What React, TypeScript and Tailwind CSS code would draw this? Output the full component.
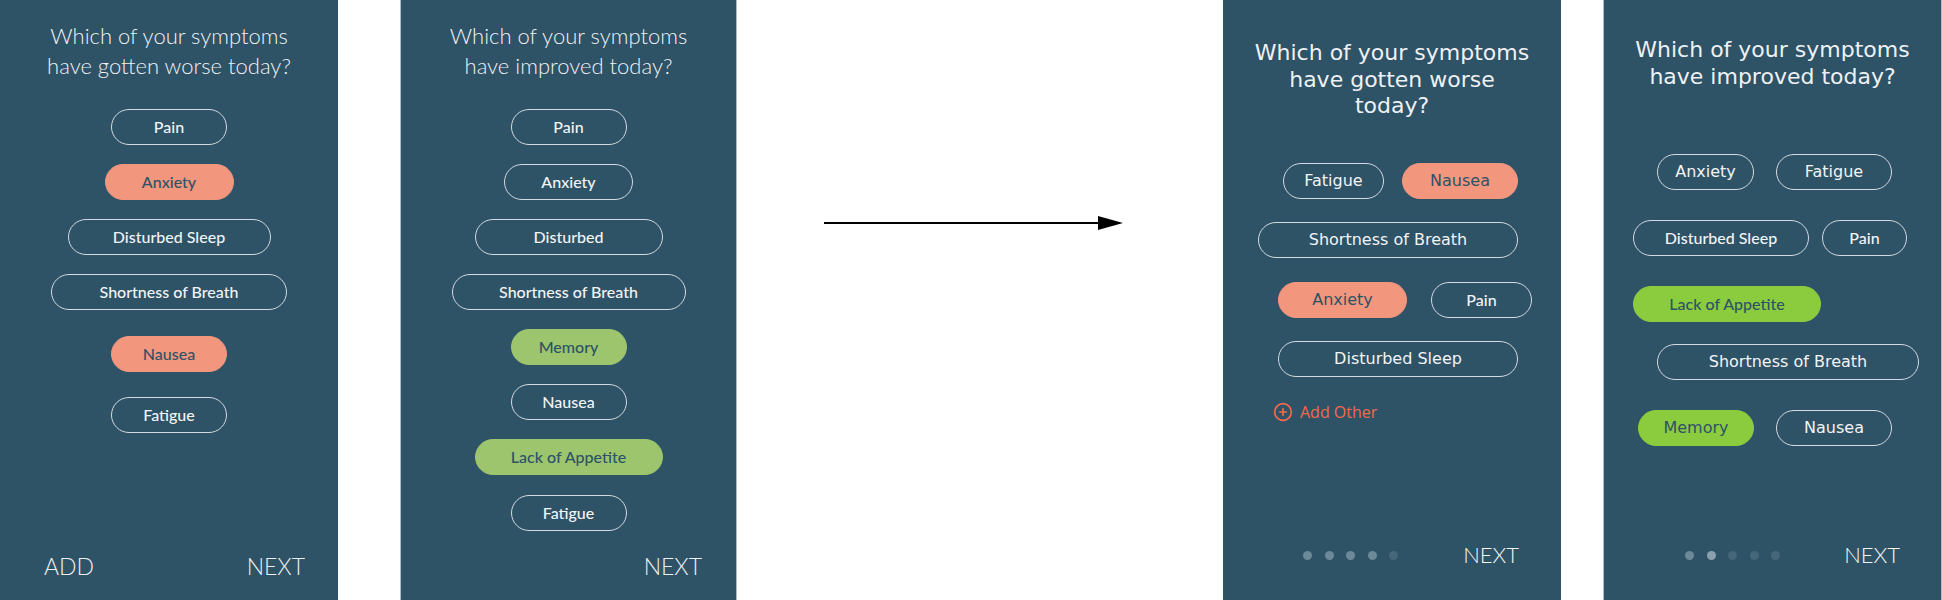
import { CirclePlus } from "lucide-react";

type Pill = { label: string; w: string; tone?: "red" | "green" | "lime"; mt: string };

const avenir = "font-['Lato','Noto_Sans',sans-serif] font-medium";
const mont = "font-['DejaVu_Sans','Noto_Sans',sans-serif] font-normal";

const toneClass = (tone?: Pill["tone"]) => {
  if (tone === "red") return "bg-[#f2967e] border-[#f2967e] text-[#2e5266]";
  if (tone === "green") return "bg-[#9dc56e] border-[#9dc56e] text-[#2e5266]";
  if (tone === "lime") return "bg-[#8acc3e] border-[#8acc3e] text-[#2e5266]";
  return "border-[#d3dbe0] text-[#f2f4f5]";
};

const PillBtn = ({ label, w, tone, mt, font }: Pill & { font: string }) => (
  <div
    className={`${w} ${mt} ${font} ${toneClass(tone)} h-9 shrink-0 rounded-full border-[1.5px] flex items-center justify-center text-[16px]`}
  >
    {label}
  </div>
);

const worseList: Pill[] = [
  { label: "Pain", w: "w-[116px]", mt: "mt-[28px]" },
  { label: "Anxiety", w: "w-[129px]", tone: "red", mt: "mt-[19px]" },
  { label: "Disturbed Sleep", w: "w-[203px]", mt: "mt-[19px]" },
  { label: "Shortness of Breath", w: "w-[236px]", mt: "mt-[19px]" },
  { label: "Nausea", w: "w-[116px]", tone: "red", mt: "mt-[26px]" },
  { label: "Fatigue", w: "w-[116px]", mt: "mt-[25px]" },
];

const improvedList: Pill[] = [
  { label: "Pain", w: "w-[116px]", mt: "mt-[28px]" },
  { label: "Anxiety", w: "w-[129px]", mt: "mt-[19px]" },
  { label: "Disturbed", w: "w-[188px]", mt: "mt-[19px]" },
  { label: "Shortness of Breath", w: "w-[234px]", mt: "mt-[19px]" },
  { label: "Memory", w: "w-[116px]", tone: "green", mt: "mt-[19px]" },
  { label: "Nausea", w: "w-[116px]", mt: "mt-[19px]" },
  { label: "Lack of Appetite", w: "w-[188px]", tone: "green", mt: "mt-[19px]" },
  { label: "Fatigue", w: "w-[116px]", mt: "mt-[20px]" },
];

const Dots = ({ shades }: { shades: string[] }) => (
  <div className="flex items-center gap-[12.5px]">
    {shades.map((s, i) => (
      <span key={i} className={`w-[9px] h-[9px] rounded-full ${s}`} />
    ))}
  </div>
);

const App = () => {
  return (
    <div className="w-[1942px] h-[600px] bg-white flex overflow-hidden">
      {/* old worse screen */}
      <div className="w-[338px] h-full bg-[#2e5266] flex flex-col items-center pt-[21px] pb-[19px]">
        <h2 className="font-['Lato',sans-serif] font-light text-[22px] leading-[30px] text-center text-[#eef1f3]">
          Which of your symptoms
          <br />
          have gotten worse today?
        </h2>
        {worseList.map((p) => (
          <PillBtn key={p.label} {...p} font={avenir} />
        ))}
        <div className="font-['Lato',sans-serif] font-light mt-auto w-full flex justify-between pl-[44px] pr-[33px] text-[23px] leading-[30px] text-[#eef1f3]">
          <span>ADD</span>
          <span>NEXT</span>
        </div>
      </div>

      {/* old improved screen */}
      <div className="ml-[62px] w-[337px] h-full bg-[#2e5266] border-x border-[#a9bcc7] flex flex-col items-center pt-[21px] pb-[19px]">
        <h2 className="font-['Lato',sans-serif] font-light text-[22px] leading-[30px] text-center text-[#eef1f3]">
          Which of your symptoms
          <br />
          have improved today?
        </h2>
        {improvedList.map((p) => (
          <PillBtn key={p.label} {...p} font={avenir} />
        ))}
        <div className="font-['Lato',sans-serif] font-light mt-auto w-full flex justify-end pr-[34px] text-[23px] leading-[30px] text-[#eef1f3]">
          <span>NEXT</span>
        </div>
      </div>

      {/* arrow */}
      <div className="w-[486px] h-full">
        <svg width="300" height="16" viewBox="0 0 300 16" className="ml-[87px] mt-[215px]">
          <line x1="0" y1="8" x2="278" y2="8" stroke="#000" strokeWidth="2" />
          <polygon points="274,1 299,8 274,15" fill="#000" />
        </svg>
      </div>

      {/* new worse screen */}
      <div className="w-[338px] h-full bg-[#2e5266] flex flex-col pt-[40px] pb-[30px]">
        <h2 className={`${mont} text-[22px] leading-[26.5px] text-center text-[#eef1f3]`}>
          Which of your symptoms
          <br />
          have gotten worse
          <br />
          today?
        </h2>
        <div className="mt-[43px] flex gap-[18px] pl-[60px]">
          <PillBtn label="Fatigue" w="w-[101px]" mt="mt-0" font={mont} />
          <PillBtn label="Nausea" w="w-[116px]" tone="red" mt="mt-0" font={mont} />
        </div>
        <div className="mt-[23px] flex pl-[35px]">
          <PillBtn label="Shortness of Breath" w="w-[260px]" mt="mt-0" font={mont} />
        </div>
        <div className="mt-[24px] flex gap-[24px] pl-[55px]">
          <PillBtn label="Anxiety" w="w-[129px]" tone="red" mt="mt-0" font={mont} />
          <PillBtn label="Pain" w="w-[101px]" mt="mt-0" font={avenir} />
        </div>
        <div className="mt-[23px] flex pl-[55px]">
          <PillBtn label="Disturbed Sleep" w="w-[240px]" mt="mt-0" font={mont} />
        </div>
        <div className="mt-[25px] pl-[50px] flex items-center gap-[7px] text-[#f26b4b] font-['Open_Sans',sans-serif] text-[16px] leading-[20px]">
          <CirclePlus size={20} strokeWidth={2} />
          <span>Add Other</span>
        </div>
        <div className="mt-auto flex items-center justify-between pl-[80px] pr-[42px]">
          <Dots shades={["bg-[#6d8898]", "bg-[#6d8898]", "bg-[#6d8898]", "bg-[#6d8898]", "bg-[#46677a]"]} />
          <span className="font-['Lato',sans-serif] font-light text-[22px] leading-[30px] text-[#f4f6f7]">NEXT</span>
        </div>
      </div>

      {/* new improved screen */}
      <div className="ml-[42px] w-[339px] h-full bg-[#2e5266] border-x border-[#a9bcc7] flex flex-col pt-[37px] pb-[30px]">
        <h2 className={`${mont} text-[22px] leading-[26.5px] text-center text-[#eef1f3]`}>
          Which of your symptoms
          <br />
          have improved today?
        </h2>
        <div className="mt-[64px] flex gap-[22px] pl-[53px]">
          <PillBtn label="Anxiety" w="w-[97px]" mt="mt-0" font={mont} />
          <PillBtn label="Fatigue" w="w-[116px]" mt="mt-0" font={mont} />
        </div>
        <div className="mt-[30px] flex gap-[13px] pl-[29px]">
          <PillBtn label="Disturbed Sleep" w="w-[176px]" mt="mt-0" font={avenir} />
          <PillBtn label="Pain" w="w-[85px]" mt="mt-0" font={avenir} />
        </div>
        <div className="mt-[30px] flex pl-[29px]">
          <PillBtn label="Lack of Appetite" w="w-[188px]" tone="lime" mt="mt-0" font={avenir} />
        </div>
        <div className="mt-[22px] flex pl-[53px]">
          <PillBtn label="Shortness of Breath" w="w-[262px]" mt="mt-0" font={mont} />
        </div>
        <div className="mt-[30px] flex gap-[22px] pl-[34px]">
          <PillBtn label="Memory" w="w-[116px]" tone="lime" mt="mt-0" font={mont} />
          <PillBtn label="Nausea" w="w-[116px]" mt="mt-0" font={mont} />
        </div>
        <div className="mt-auto flex items-center justify-between pl-[81px] pr-[41px]">
          <Dots shades={["bg-[#6d8898]", "bg-[#8aa0ad]", "bg-[#46677a]", "bg-[#46677a]", "bg-[#46677a]"]} />
          <span className="font-['Lato',sans-serif] font-light text-[22px] leading-[30px] text-[#f4f6f7]">NEXT</span>
        </div>
      </div>
    </div>
  );
};

export default App;
